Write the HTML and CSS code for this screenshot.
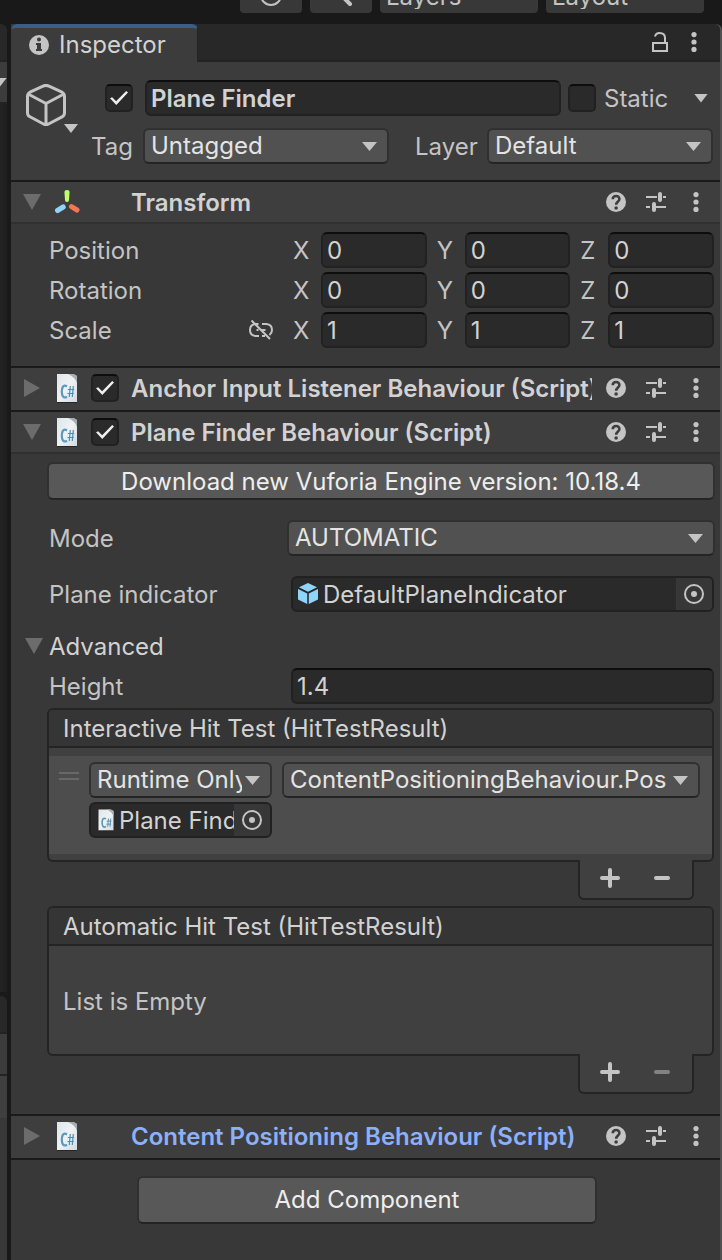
FILE: index.html
```
<!DOCTYPE html>
<html lang="en">
<head>
<meta charset="utf-8">
<title>Inspector</title>
<link rel="stylesheet" href="styles.css">
</head>
<body>
<svg class="defs" aria-hidden="true">
  <defs>
    <linearGradient id="paper" x1="0" y1="0" x2="1" y2="1"><stop offset="0" stop-color="#dfe5ea"/><stop offset=".5" stop-color="#eef2f4"/><stop offset="1" stop-color="#d3d9df"/></linearGradient>
    <symbol id="help" viewBox="0 0 20 20"><circle cx="10" cy="10" r="10" fill="#c4c4c4"/><path d="M6.700 7.200C6.900 3 13.400 3 13.400 7C13.400 9.600 10.200 9.400 10.200 12.800" fill="none" stroke="#3e3e3e" stroke-width="2.600"/><circle cx="10.100" cy="16" r="1.800" fill="#3e3e3e"/></symbol>
    <symbol id="sliders" viewBox="0 0 20 20"><path d="M0 5H11M17 5H20M0 15H4M10 15H20" stroke="#c4c4c4" stroke-width="2"/><path d="M14 2V8M8 12V18" stroke="#c4c4c4" stroke-width="4" stroke-linecap="round"/></symbol>
    <symbol id="dots" viewBox="0 0 20 20"><g fill="#c4c4c4"><circle cx="10" cy="2.6" r="2.6"/><circle cx="10" cy="10" r="2.6"/><circle cx="10" cy="17.4" r="2.6"/></g></symbol>
    <symbol id="script" viewBox="0 0 24 32"><path d="M2 2H17L22 4V30H2Z" fill="url(#paper)"/><path d="M2 30.500H22" stroke="#252525"/><path d="M13 2H19L22 4V11Q20 5 13 2Z" fill="#a9aeb3"/><path d="M12 14.500C8 12 6.800 16 6.800 19.500S8 27 12 24.700" fill="none" stroke="#5b9abf" stroke-width="2.200"/><path d="M15.300 14L14.300 25M18.300 14L17.300 25M12.800 17.500H19.200M12.400 21.500H18.800" stroke="#4e8db4" stroke-width="1.200" fill="none"/></symbol>
    <symbol id="picker" viewBox="0 0 20 20"><circle cx="10" cy="10" r="9" fill="none" stroke="#c4c4c4" stroke-width="2"/><circle cx="10" cy="10" r="3" fill="#c4c4c4"/></symbol>
    <symbol id="plus" viewBox="0 0 20 20"><path d="M10 2V18M2 10H18" stroke="#c4c4c4" stroke-width="4" stroke-linecap="round"/></symbol>
    <symbol id="minus" viewBox="0 0 20 20"><path d="M4 10H16" stroke="#c4c4c4" stroke-width="4" stroke-linecap="round"/></symbol>
  </defs>
</svg>

<div class="toolbar">
  <button class="tool" aria-label="History"><svg width="24" height="24" viewBox="0 0 24 24"><circle cx="12" cy="12" r="10" fill="none" stroke="#c4c4c4" stroke-width="2"/></svg></button>
  <button class="tool" aria-label="Search"><svg width="24" height="24" viewBox="0 0 24 24"><circle cx="10" cy="8" r="7" fill="none" stroke="#c4c4c4" stroke-width="2"/><path d="M14 14L21 21" stroke="#c4c4c4" stroke-width="4" stroke-linecap="round"/></svg></button>
  <select class="tool tool-wide" aria-label="Layers"><option>Layers</option></select>
  <select class="tool tool-wide" aria-label="Layout"><option>Layout</option></select>
</div>

<div class="workspace">
  <aside class="neighbour">
    <div class="n-tab"></div>
    <div class="n-bar"><span class="arrow"></span></div>
    <div class="n-view"></div>
    <div class="n-tab"></div>
    <div class="n-bar"></div>
    <div class="n-bar n-bar-low"></div>
    <div class="n-rest"></div>
  </aside>

  <main class="inspector">
    <div class="tabs">
      <div class="tab">
        <svg width="20" height="20" viewBox="0 0 20 20"><circle cx="10" cy="10" r="10" fill="#c4c4c4"/><circle cx="10" cy="4.500" r="2" fill="#3c3c3c"/><path d="M7 8H12V14H13V16H7V14H8V10H7Z" fill="#3c3c3c"/></svg>
        <span>Inspector</span>
      </div>
      <div class="tab-tools">
        <button class="icon-btn" aria-label="Lock"><svg width="20" height="20" viewBox="0 0 20 20"><path d="M5 4.500C5.500 2.500 7 1 9.500 1C13 1 15 2.500 15 6V10M3 11H17V19H3Z" fill="none" stroke="#c4c4c4" stroke-width="2"/></svg></button>
        <button class="icon-btn" aria-label="Menu"><svg width="20" height="20"><use href="#dots"/></svg></button>
      </div>
    </div>

    <section class="object">
      <button class="icon-btn object-icon" aria-label="Object icon">
        <svg width="40" height="42" viewBox="0 0 40 42"><path d="M17 2.200Q20 .6 23 2.200L36 8.200Q38.500 9.600 38.500 12.500V29Q38.500 31.500 36 32.800L22.500 40Q20 41.300 17.500 40L4 32.800Q1.500 31.500 1.500 29V12.500Q1.500 9.600 4 8.200ZM3 10.500L20 19.500L37 10.500M20 19.500V40" fill="none" stroke="#c4c4c4" stroke-width="3" stroke-linejoin="round"/></svg>
        <span class="arrow"></span>
      </button>
      <div class="object-rows">
        <div class="name-row">
          <input type="checkbox" class="check" aria-label="Active" checked>
          <input type="text" class="field name" aria-label="Name" value="Plane Finder">
          <input type="checkbox" class="check" id="static">
          <label for="static">Static</label>
          <button class="icon-btn" aria-label="Static options"><span class="arrow"></span></button>
        </div>
        <div class="tag-row">
          <label for="tag">Tag</label>
          <span class="drop"><select id="tag"><option>Untagged</option></select></span>
          <label for="layer" class="layer-label">Layer</label>
          <span class="drop"><select id="layer"><option>Default</option></select></span>
        </div>
      </div>
    </section>

    <section class="component">
      <header class="head open">
        <button class="icon-btn fold down" aria-label="Collapse"></button>
        <svg class="kind" width="26" height="26" viewBox="0 0 26 26"><path d="M10.500 4Q10 1 13 1T15.500 4L15 11Q15 13 13 13T11 11Z" fill="#c2fb6e"/><path d="M9.200 18L3.500 21.500" stroke="#91d3fb" stroke-width="5" stroke-linecap="round"/><path d="M17.500 17.600L23 21" stroke="#f0774f" stroke-width="5" stroke-linecap="round"/></svg>
        <span class="slot"></span>
        <h2>Transform</h2>
        <button class="icon-btn" aria-label="Help"><svg width="20" height="20"><use href="#help"/></svg></button>
        <button class="icon-btn" aria-label="Presets"><svg width="20" height="20"><use href="#sliders"/></svg></button>
        <button class="icon-btn" aria-label="Menu"><svg width="20" height="20"><use href="#dots"/></svg></button>
      </header>
      <div class="vectors">
        <div class="vector"><span class="vector-name">Position</span>
          <label><span>X</span><input class="field" value="0"></label><label><span>Y</span><input class="field" value="0"></label><label><span>Z</span><input class="field" value="0"></label></div>
        <div class="vector"><span class="vector-name">Rotation</span>
          <label><span>X</span><input class="field" value="0"></label><label><span>Y</span><input class="field" value="0"></label><label><span>Z</span><input class="field" value="0"></label></div>
        <div class="vector"><span class="vector-name">Scale
          <button class="icon-btn" aria-label="Constrain proportions"><svg width="24" height="20" viewBox="0 0 24 20"><path d="M9.500 4H6.500Q1 4.500 1 10T6.500 16H10M13 4H17.500Q23 4.500 23 10Q23 13 20.500 15M13 16H16M7.500 10H9.500M12 10H16.500M2.500 .5L21 19" fill="none" stroke="#c4c4c4" stroke-width="2"/></svg></button></span>
          <label><span>X</span><input class="field" value="1"></label><label><span>Y</span><input class="field" value="1"></label><label><span>Z</span><input class="field" value="1"></label></div>
      </div>
    </section>

    <section class="component">
      <header class="head">
        <button class="icon-btn fold" aria-label="Expand"></button>
        <svg class="kind" width="24" height="32"><use href="#script"/></svg>
        <input type="checkbox" class="check" aria-label="Anchor Input Listener enabled" checked>
        <h2>Anchor Input Listener Behaviour (Script)</h2>
        <button class="icon-btn" aria-label="Help"><svg width="20" height="20"><use href="#help"/></svg></button>
        <button class="icon-btn" aria-label="Presets"><svg width="20" height="20"><use href="#sliders"/></svg></button>
        <button class="icon-btn" aria-label="Menu"><svg width="20" height="20"><use href="#dots"/></svg></button>
      </header>
    </section>

    <section class="component">
      <header class="head open">
        <button class="icon-btn fold down" aria-label="Collapse"></button>
        <svg class="kind" width="24" height="32"><use href="#script"/></svg>
        <input type="checkbox" class="check" aria-label="Plane Finder enabled" checked>
        <h2>Plane Finder Behaviour (Script)</h2>
        <button class="icon-btn" aria-label="Help"><svg width="20" height="20"><use href="#help"/></svg></button>
        <button class="icon-btn" aria-label="Presets"><svg width="20" height="20"><use href="#sliders"/></svg></button>
        <button class="icon-btn" aria-label="Menu"><svg width="20" height="20"><use href="#dots"/></svg></button>
      </header>
      <div class="finder">
        <button class="btn">Download new Vuforia Engine version: 10.18.4</button>
        <div class="prop prop-mode"><label for="mode">Mode</label><span class="drop"><select id="mode"><option>AUTOMATIC</option></select></span></div>
        <div class="prop prop-plane"><span class="prop-name">Plane indicator</span>
          <div class="object-field">
            <svg width="22" height="24" viewBox="0 0 22 24"><path d="M11 1L20 5.200L11 9.800L2 5.200ZM1 7L10.200 11.500V22L1 17.500ZM21 7L11.800 11.500V22L21 17.500Z" fill="#8ed4fb"/></svg>
            <span class="ref">DefaultPlaneIndicator</span>
            <button class="pick" aria-label="Select object"><svg width="20" height="20"><use href="#picker"/></svg></button>
          </div>
        </div>
        <div class="advanced"><button class="icon-btn fold down" aria-label="Collapse advanced"></button><span>Advanced</span></div>
        <div class="prop prop-height"><label for="height">Height</label><input id="height" class="field" value="1.4"></div>

        <div class="event">
          <h3>Interactive Hit Test (HitTestResult)</h3>
          <div class="listener">
            <span class="grip"></span>
            <span class="drop call"><select aria-label="Call state"><option>Runtime Only</option></select></span>
            <span class="drop method"><select aria-label="Method"><option>ContentPositioningBehaviour.Pos</option></select></span>
            <div class="object-field target">
              <svg width="18" height="24" viewBox="0 0 24 32"><use href="#script" width="24" height="32"/></svg>
              <span class="ref">Plane Finder</span>
              <button class="pick" aria-label="Select target"><svg width="20" height="20"><use href="#picker"/></svg></button>
            </div>
          </div>
        </div>
        <div class="event-foot">
          <button class="icon-btn" aria-label="Add"><svg width="20" height="20"><use href="#plus"/></svg></button>
          <button class="icon-btn" aria-label="Remove"><svg width="20" height="20"><use href="#minus"/></svg></button>
        </div>

        <div class="event">
          <h3>Automatic Hit Test (HitTestResult)</h3>
          <p class="empty">List is Empty</p>
        </div>
        <div class="event-foot">
          <button class="icon-btn" aria-label="Add"><svg width="20" height="20"><use href="#plus"/></svg></button>
          <button class="icon-btn" aria-label="Remove" disabled><svg width="20" height="20"><use href="#minus"/></svg></button>
        </div>
      </div>
    </section>

    <section class="component">
      <header class="head">
        <button class="icon-btn fold" aria-label="Expand"></button>
        <svg class="kind" width="24" height="32"><use href="#script"/></svg>
        <span class="slot"></span>
        <h2 class="added">Content Positioning Behaviour (Script)</h2>
        <button class="icon-btn" aria-label="Help"><svg width="20" height="20"><use href="#help"/></svg></button>
        <button class="icon-btn" aria-label="Presets"><svg width="20" height="20"><use href="#sliders"/></svg></button>
        <button class="icon-btn" aria-label="Menu"><svg width="20" height="20"><use href="#dots"/></svg></button>
      </header>
    </section>

    <button class="btn add">Add Component</button>
  </main>
</div>
</body>
</html>
```

FILE: styles.css
```
*, *::before, *::after { box-sizing: border-box; }

body {
  margin: 0;
  min-height: 100vh;
  display: flex;
  flex-direction: column;
  background: #191919;
  color: #c4c4c4;
  font: 24px/32px Inter, "Liberation Sans", sans-serif;
}

button, input, select { font: inherit; color: inherit; margin: 0; }
svg { display: block; flex: none; }
.defs { position: absolute; width: 0; height: 0; }

.icon-btn {
  display: flex;
  align-items: center;
  justify-content: center;
  flex: none;
  padding: 0;
  border: 0;
  background: none;
}
.icon-btn:disabled { opacity: .5; }

.arrow {
  display: block;
  flex: none;
  width: 14px;
  height: 9px;
  background: #c4c4c4;
  clip-path: polygon(0 0, 100% 0, 50% 100%);
}

/* Toolbar */
.toolbar {
  display: flex;
  align-items: flex-end;
  justify-content: flex-end;
  gap: 8px;
  height: 24px;
  padding: 0 18px 11px 0;
  overflow: hidden;
}
.tool {
  appearance: none;
  display: flex;
  align-items: center;
  justify-content: center;
  flex: none;
  width: 62px;
  height: 32px;
  padding: 0 0 4px;
  border: 0;
  border-radius: 4px;
  background: #383838;
}
.tool-wide { width: 158px; padding: 0 6px 4px; }

.workspace { flex: 1; display: flex; gap: 4px; }

/* Edge of the neighbouring panel */
.neighbour { display: flex; flex-direction: column; flex: none; width: 7px; overflow: hidden; }
.n-tab { height: 38px; border-bottom: 2px solid #232323; border-top-right-radius: 6px; background: #282828; }
.n-bar { height: 42px; display: flex; align-items: center; justify-content: flex-end; border-bottom: 2px solid #232323; background: #3c3c3c; }
.n-bar-low { border-bottom: 0; background: #3f3f3f; }
.n-view { height: 888px; margin-bottom: 4px; background: linear-gradient(90deg, #232323, #1e1e1e); }
.n-rest { flex: 1; background: #383838; }

/* Inspector */
.inspector { flex: 1; min-width: 0; background: #383838; border-right: 2px solid #505050; border-top-right-radius: 6px; }

.tabs { display: flex; justify-content: space-between; height: 38px; background: #282828; border-bottom: 2px solid #232323; border-radius: 6px 6px 0 0; }
.tab {
  display: flex;
  align-items: center;
  gap: 10px;
  width: 187px;
  height: 38px;
  padding: 0 18px;
  border-top: 4px solid #3a5d8a;
  border-right: 1px solid #232323;
  border-radius: 6px 6px 0 0;
  background: #3c3c3c;
  color: #d2d2d2;
}
.tab-tools { display: flex; align-items: center; gap: 14px; padding-right: 16px; }

.field, .object-field {
  min-width: 0;
  height: 36px;
  padding: 1px 4px 0;
  border: 2px solid #212121;
  border-radius: 6px;
  background: #2a2a2a;
  color: #d2d2d2;
}
.field { border-top-color: #0d0d0d; }

.drop { position: relative; display: block; min-width: 0; }
.drop::after {
  content: "";
  position: absolute;
  top: 14px;
  right: 12px;
  width: 15px;
  height: 9px;
  background: #c4c4c4;
  clip-path: polygon(0 0, 100% 0, 50% 100%);
  pointer-events: none;
}
.drop select {
  appearance: none;
  display: block;
  width: 100%;
  height: 36px;
  padding: 0 28px 0 6px;
  border: 2px solid #303030;
  border-bottom-color: #242424;
  border-radius: 6px;
  background: #515151;
  color: #e4e4e4;
}

.check {
  appearance: none;
  flex: none;
  display: flex;
  align-items: center;
  justify-content: center;
  width: 28px;
  height: 28px;
  border: 2px solid #212121;
  border-top-color: #0d0d0d;
  border-radius: 5px;
  background: #2a2a2a;
}
.check:checked::before {
  content: "";
  width: 18px;
  height: 14px;
  background: #eee;
  clip-path: polygon(0 52%, 12% 44%, 34% 74%, 90% 0, 100% 10%, 35% 100%);
}

/* Object header */
.object {
  display: flex;
  padding: 18px 7px 16px 15px;
  border-bottom: 2px solid #1a1a1a;
  background: #3c3c3c;
}
.object-icon { position: relative; align-self: flex-start; margin-top: 4px; }
.object-icon .arrow { position: absolute; left: 38px; top: 40px; }
.object-rows { flex: 1; min-width: 0; display: flex; flex-direction: column; gap: 12px; padding-left: 14px; }
.name-row { display: flex; align-items: center; padding: 0 5px 0 25px; }
.name { flex: 1; margin: 0 7px 0 12px; font-weight: 600; }
.name-row label { width: 98px; padding: 2px 0 0 8px; }
.tag-row { display: grid; grid-template-columns: 63px 246fr 98px 226fr; align-items: center; }
.tag-row label { padding: 2px 0 0 11px; }
.tag-row .layer-label { padding-left: 26px; }

/* Components */
.component { border-bottom: 2px solid #1a1a1a; }
.head { display: flex; align-items: center; height: 42px; padding: 0 14px 2px 12px; background: #3e3e3e; }
.head.open { padding-bottom: 0; border-bottom: 2px solid #303030; }
.fold { width: 18px; height: 18px; }
.fold::before { content: ""; width: 16px; height: 18px; background: #6c6c6c; clip-path: polygon(0 0, 100% 50%, 0 100%); }
.fold.down::before { width: 18px; height: 16px; clip-path: polygon(0 0, 100% 0, 50% 100%); }
.kind { width: 26px; margin: 0 11px 0 13px; }
.slot { flex: none; width: 28px; }
.head h2 {
  flex: 1;
  min-width: 0;
  margin: 0 14px 0 12px;
  padding-top: 2px;
  overflow: hidden;
  white-space: nowrap;
  font-size: 24px;
  font-weight: 600;
  color: #d2d2d2;
}
.head h2.added { color: #8cb0fb; }
.head h2 ~ .icon-btn + .icon-btn { margin-left: 20px; }

.vectors { display: flex; flex-direction: column; gap: 4px; padding: 8px 6px 18px 38px; }
.vector { display: grid; grid-template-columns: 234px 1fr 1fr 1fr; gap: 10px; }
.vector label { display: grid; grid-template-columns: 28px 1fr; align-items: center; min-width: 0; }
.vector label span { padding-top: 2px; }
.vector .field { width: 100%; }
.vector-name { display: flex; align-items: center; justify-content: space-between; padding: 2px 10px 0 0; }
.vector-name .icon-btn { padding-bottom: 2px; }

.btn {
  display: block;
  width: 100%;
  height: 38px;
  padding: 0;
  border: 2px solid #303030;
  border-bottom-color: #242424;
  border-radius: 6px;
  background: #585858;
  color: #eee;
}
.add { width: 460px; max-width: 90%; height: 48px; margin: 16px auto 36px 126px; }

.finder { padding: 8px 5px 20px 36px; }
.finder .btn { padding-top: 2px; }
.prop { display: grid; grid-template-columns: 242px 1fr; align-items: center; padding: 0 1px 0 2px; }
.prop label, .prop-name { padding-top: 2px; }
.prop-mode { grid-template-columns: 238px 1fr; margin-top: 20px; padding-right: 0; }
.prop-plane { margin-top: 20px; }
.prop-height { margin-top: 4px; }
.prop .field { width: 100%; }
.object-field { display: flex; align-items: center; padding: 0 0 0 4px; }
.object-field svg { margin-right: 4px; }
.ref { flex: 1; min-width: 0; padding-top: 2px; overflow: hidden; white-space: nowrap; }
.pick { display: flex; align-items: center; flex: none; height: 32px; padding: 0 8px; border: 0; border-radius: 0 4px 4px 0; background: #373737; }
.pick svg { margin: 0; }
.advanced { display: flex; align-items: center; gap: 6px; height: 36px; margin: 16px 0 0 -22px; color: #d2d2d2; }
.advanced span { padding-top: 2px; }

/* Event lists */
.event { margin-top: 4px; margin-right: 1px; border: 2px solid #242424; border-radius: 6px; background: #404040; overflow: hidden; }
.event h3 { margin: 0; padding: 3px 14px 1px; border-bottom: 2px solid #242424; background: #353535; font-size: 24px; font-weight: 400; color: #d2d2d2; }
.listener {
  display: grid;
  grid-template-columns: 20px 183px 1fr;
  column-gap: 10px;
  row-gap: 4px;
  margin: 8px 0 6px;
  padding: 6px 12px 16px 10px;
  background: #4d4d4d;
}
.grip { height: 8px; margin-top: 10px; border: solid #686868; border-width: 2px 0; }
.target { grid-column: 2; padding-left: 6px; }
.target .pick svg { margin: 0; }
.empty { margin: 0; padding: 40px 14px 36px; }
.event-foot {
  position: relative;
  display: flex;
  justify-content: space-between;
  width: 116px;
  height: 40px;
  margin: -2px 21px 0 auto;
  padding: 0 20px 2px;
  border: 2px solid #242424;
  border-top: 0;
  border-radius: 0 0 6px 6px;
  background: #404040;
}
.event-foot + .event { margin-top: 6px; }
```
